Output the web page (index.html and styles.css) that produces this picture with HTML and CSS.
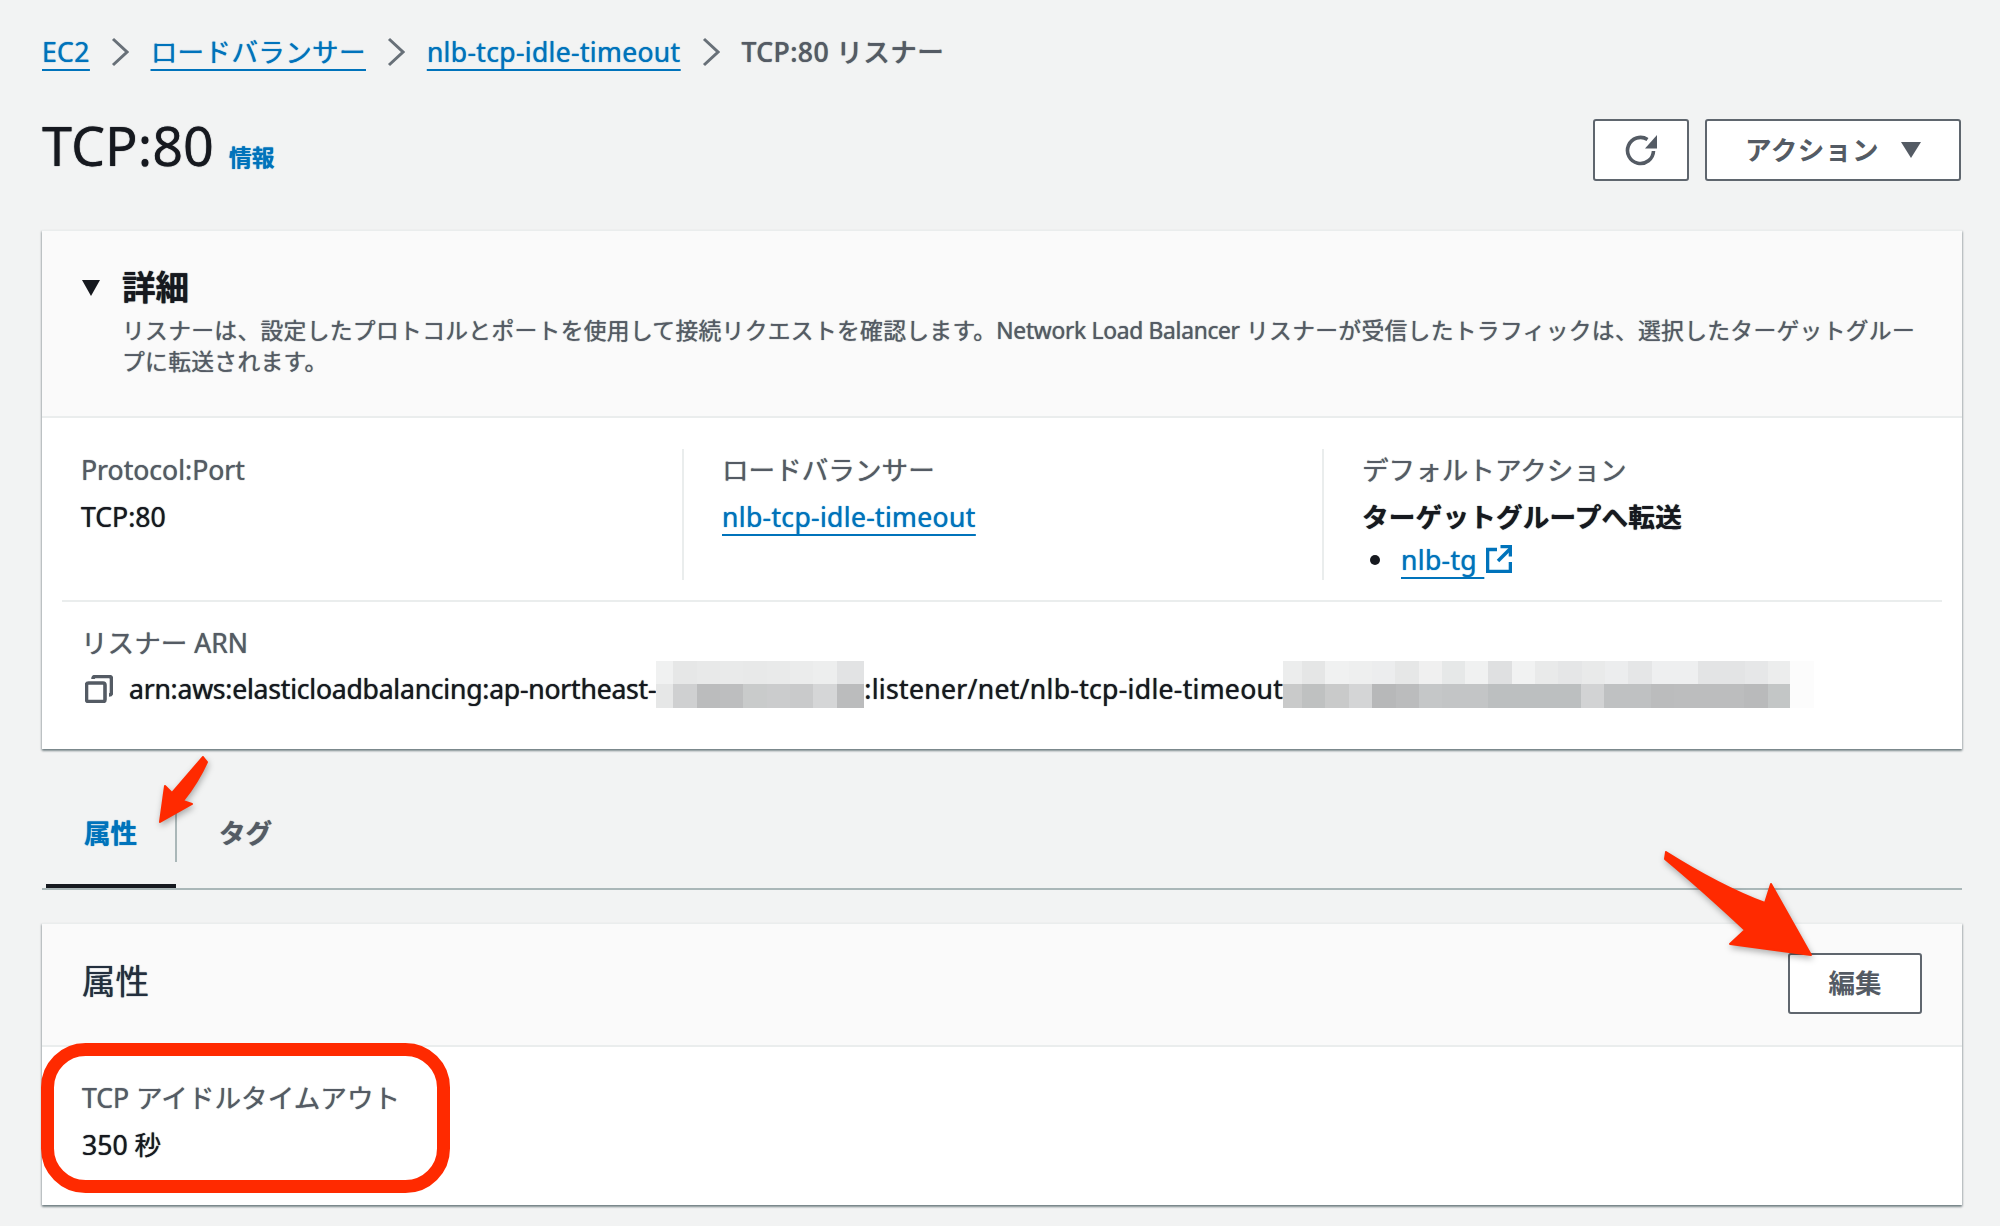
FILE: index.html
```html
<!doctype html>
<html lang="ja">
  <head>
    <meta charset="UTF-8" />
    <title>TCP:80 リスナー</title>
    <link rel="stylesheet" href="styles.css">
  </head>
  <body>
    <div class="page">
      <nav class="crumbs">
        <a href="#">EC2</a>
        <svg class="chevron" viewBox="0 0 18 30"><path d="M2 2 L16 15 L2 28" /></svg>
        <a href="#">ロードバランサー</a>
        <svg class="chevron" viewBox="0 0 18 30"><path d="M2 2 L16 15 L2 28" /></svg>
        <a href="#">nlb-tcp-idle-timeout</a>
        <svg class="chevron" viewBox="0 0 18 30"><path d="M2 2 L16 15 L2 28" /></svg>
        <span class="crumb-current">TCP:80 リスナー</span>
      </nav>

      <header class="title-row">
        <div class="title">
          <h1>TCP:80</h1>
          <a href="#" class="info">情報</a>
        </div>
        <div class="actions">
          <button class="btn btn-refresh">
            <svg class="refresh-icon" viewBox="0 0 32 32">
              <path d="M28.5 17a13 13 0 1 1-6-11.5" />
              <polygon points="20,14.5 32,14.5 32,1" />
            </svg>
          </button>
          <button class="btn btn-actions">アクション<span class="caret"></span></button>
        </div>
      </header>

      <section class="panel">
        <div class="details-head">
          <span class="expand-mark"></span>
          <div>
            <h2>詳細</h2>
            <p class="desc">リスナーは、設定したプロトコルとポートを使用して接続リクエストを確認します。<span class="desc-latin">Network Load Balancer</span> リスナーが受信したトラフィックは、選択したターゲットグルー<br />プに転送されます。</p>
          </div>
        </div>
        <div class="details-body">
          <div class="columns">
            <div class="col">
              <div class="label">Protocol:Port</div>
              <div class="value">TCP:80</div>
            </div>
            <div class="col">
              <div class="label">ロードバランサー</div>
              <div class="value"><a href="#">nlb-tcp-idle-timeout</a></div>
            </div>
            <div class="col">
              <div class="label">デフォルトアクション</div>
              <div class="value strong">ターゲットグループへ転送</div>
              <ul class="targets">
                <li>
                  <a href="#">nlb-tg&nbsp;</a>
                  <svg class="external-icon" viewBox="0 0 26 28">
                    <path d="M11 4.5 H1.5 V26.5 H24.5 V17" />
                    <path d="M12 16 L24 4" />
                    <path d="M14.5 1.5 H24.5 V11.5" />
                  </svg>
                </li>
              </ul>
            </div>
          </div>
          <div class="arn">
            <div class="label">リスナー ARN</div>
            <div class="arn-value">
              <svg class="copy-icon" viewBox="0 0 28 28">
                <rect x="1.5" y="8" width="18.5" height="18.5" rx="2" />
                <path d="M8 4 Q8 1.5 10.5 1.5 H24 Q26.5 1.5 26.5 4 V17.5 Q26.5 20 24 20" />
              </svg>
              <span class="arn-head">arn:aws:elasticloadbalancing:ap-northeast-</span>
              <svg class="mosaic mosaic-a" viewBox="0 0 208 47">
                <rect x="0" y="0" width="17" height="23" fill="#f0f1f1" />
                <rect x="17" y="0" width="24" height="23" fill="#e6e7e7" />
                <rect x="41" y="0" width="23" height="23" fill="#e8e9e9" />
                <rect x="64" y="0" width="23" height="23" fill="#e9eaea" />
                <rect x="87" y="0" width="24" height="23" fill="#e8e9e9" />
                <rect x="111" y="0" width="23" height="23" fill="#e9eaea" />
                <rect x="134" y="0" width="23" height="23" fill="#ebecec" />
                <rect x="157" y="0" width="24" height="23" fill="#edeeee" />
                <rect x="181" y="0" width="27" height="23" fill="#e2e3e4" />
                <rect x="0" y="23" width="17" height="24" fill="#e6e7e7" />
                <rect x="17" y="23" width="24" height="24" fill="#cfd0d1" />
                <rect x="41" y="23" width="23" height="24" fill="#bbbcbd" />
                <rect x="64" y="23" width="23" height="24" fill="#bdbebf" />
                <rect x="87" y="23" width="24" height="24" fill="#c9cbcb" />
                <rect x="111" y="23" width="23" height="24" fill="#cbcccd" />
                <rect x="134" y="23" width="23" height="24" fill="#c9cacb" />
                <rect x="157" y="23" width="24" height="24" fill="#d5d6d7" />
                <rect x="181" y="23" width="27" height="24" fill="#bbbcbd" />
              </svg>
              <span class="arn-tail">:listener/net/nlb-tcp-idle-timeout</span>
              <svg class="mosaic mosaic-b" viewBox="0 0 531 47">
                <rect x="0" y="0" width="19" height="23" fill="#eceded" />
                <rect x="19" y="0" width="23" height="23" fill="#e5e6e6" />
                <rect x="42" y="0" width="24" height="23" fill="#f0f1f1" />
                <rect x="66" y="0" width="23" height="23" fill="#eeefef" />
                <rect x="89" y="0" width="23" height="23" fill="#ecedee" />
                <rect x="112" y="0" width="24" height="23" fill="#e6e7e7" />
                <rect x="136" y="0" width="23" height="23" fill="#f0f0f0" />
                <rect x="159" y="0" width="23" height="23" fill="#e6e8e8" />
                <rect x="182" y="0" width="23" height="23" fill="#f0f1f1" />
                <rect x="205" y="0" width="24" height="23" fill="#dfe0e1" />
                <rect x="229" y="0" width="23" height="23" fill="#f1f2f2" />
                <rect x="252" y="0" width="23" height="23" fill="#e9eaea" />
                <rect x="275" y="0" width="24" height="23" fill="#e5e6e7" />
                <rect x="299" y="0" width="23" height="23" fill="#e9eaea" />
                <rect x="322" y="0" width="23" height="23" fill="#ecedee" />
                <rect x="345" y="0" width="24" height="23" fill="#e5e6e7" />
                <rect x="369" y="0" width="46" height="23" fill="#eeeff0" />
                <rect x="415" y="0" width="47" height="23" fill="#e3e4e5" />
                <rect x="462" y="0" width="23" height="23" fill="#e6e7e8" />
                <rect x="485" y="0" width="22" height="23" fill="#eceded" />
                <rect x="507" y="0" width="24" height="23" fill="#fcfcfc" />
                <rect x="0" y="23" width="19" height="24" fill="#c9caca" />
                <rect x="19" y="23" width="23" height="24" fill="#bfc1c1" />
                <rect x="42" y="23" width="24" height="24" fill="#c9caca" />
                <rect x="66" y="23" width="23" height="24" fill="#d4d5d6" />
                <rect x="89" y="23" width="24" height="24" fill="#b7b8b9" />
                <rect x="113" y="23" width="23" height="24" fill="#bbbcbd" />
                <rect x="136" y="23" width="23" height="24" fill="#c5c7c8" />
                <rect x="159" y="23" width="46" height="24" fill="#c3c5c6" />
                <rect x="205" y="23" width="93" height="24" fill="#bcbfc0" />
                <rect x="298" y="23" width="23" height="24" fill="#d2d3d4" />
                <rect x="321" y="23" width="47" height="24" fill="#bfc1c2" />
                <rect x="368" y="23" width="23" height="24" fill="#bbbcbd" />
                <rect x="391" y="23" width="70" height="24" fill="#bcbdbe" />
                <rect x="461" y="23" width="24" height="24" fill="#b9babb" />
                <rect x="485" y="23" width="22" height="24" fill="#c3c6c6" />
                <rect x="507" y="23" width="24" height="24" fill="#fcfcfc" />
              </svg>
            </div>
          </div>
        </div>
      </section>

      <div class="tabs">
        <div class="tab tab-active"><span class="tab-label">属性</span></div>
        <div class="tab"><span class="tab-label tab-plain">タグ</span></div>
      </div>

      <section class="panel panel-attrs">
        <div class="attrs-head">
          <h3>属性</h3>
          <button class="btn btn-edit">編集</button>
        </div>
        <div class="attrs-body">
          <div class="label">TCP アイドルタイムアウト</div>
          <div class="value">350 秒</div>
        </div>
      </section>
    </div>

    <!-- annotations drawn on top of the screenshot -->
    <svg class="marks" viewBox="0 0 2000 1226">
      <rect class="mark-ring" x="47.5" y="1049.5" width="396" height="137" rx="38" />
      <path class="mark-arrow" d="M203 757 L172 793 L165 786 L160 822 L192 804 L183 801 Q198 782 207 762 Z" />
      <path class="mark-arrow" d="M1666 852 Q1720 886 1765 903 L1771 884 L1811 955 L1730 944 L1745 930 Q1700 888 1665 859 Z" />
    </svg>
  </body>
</html>
```

FILE: styles.css
```css
* {
  box-sizing: border-box;
}
body {
  margin: 0;
  background: #f2f3f3;
  color: #16191f;
  font-family: "Noto Sans", "Noto Sans CJK JP", sans-serif;
  font-size: 26.6px;
  line-height: 38px;
  overflow: hidden;
  text-shadow: 0 0 1px currentColor;
}
a {
  color: #0073bb;
  letter-spacing: 0.3px;
  text-decoration: underline;
  text-decoration-thickness: 2px;
  text-underline-offset: 7px;
}
.page {
  position: relative;
  width: 2000px;
  height: 1226px;
  padding: 30px 38px 0 42px;
}

/* breadcrumbs */
.crumbs {
  display: flex;
  align-items: center;
  gap: 21.5px;
  height: 44px;
}
.chevron {
  width: 18px;
  height: 30px;
  fill: none;
  stroke: #687078;
  stroke-width: 3;
}
.crumb-current {
  color: #545b64;
  letter-spacing: 0.4px;
  font-weight: 500;
}

/* title */
.title-row {
  display: flex;
  justify-content: space-between;
  margin-top: 45px;
  height: 62px;
}
.title {
  display: flex;
  align-items: baseline;
  gap: 15px;
  margin-top: -5px;
}
h1 {
  margin: 0;
  font-size: 54px;
  font-weight: 400;
  line-height: 62px;
}
.info {
  font-size: 22.8px;
  font-weight: 700;
  letter-spacing: 0;
  text-decoration: none;
}
.actions {
  display: flex;
  gap: 16px;
  margin-right: 1px;
}
.btn {
  display: flex;
  align-items: center;
  justify-content: center;
  background: #fff;
  border: 2px solid #5f666e;
  border-radius: 3px;
  color: #545b64;
  font-family: inherit;
  font-size: 26.6px;
  font-weight: 700;
  padding: 0 0 3px;
}
.btn-refresh {
  width: 96px;
  padding: 0;
}
.refresh-icon {
  width: 32px;
  height: 32px;
  fill: #545b64;
}
.refresh-icon path {
  fill: none;
  stroke: #545b64;
  stroke-width: 3.6;
}
.btn-actions {
  width: 256px;
  gap: 22px;
  letter-spacing: 0.5px;
}
.caret {
  width: 0;
  height: 0;
  margin-top: 3px;
  border-left: 10px solid transparent;
  border-right: 10px solid transparent;
  border-top: 16px solid #545b64;
}

/* panels */
.panel {
  background: #fff;
  margin-top: 49px;
  height: 519px;
  box-shadow: 0 2px 2px rgba(0, 28, 36, 0.4), 1px 1px 2px rgba(0, 28, 36, 0.15), -1px 1px 2px rgba(0, 28, 36, 0.15);
  border-top: 1px solid #eaeded;
}
.details-head {
  display: flex;
  background: #fafafa;
  border-bottom: 2px solid #eaeded;
  height: 187px;
  padding: 36px 36px 0 40px;
}
.expand-mark {
  flex: none;
  width: 0;
  height: 0;
  margin: 13px 22px 0 0;
  border-left: 9px solid transparent;
  border-right: 9px solid transparent;
  border-top: 16px solid #16191f;
}
h2 {
  margin: 0;
  font-size: 33.6px;
  font-weight: 700;
  line-height: 40px;
}
.desc {
  margin: 8px 0 0;
  color: #545b64;
  font-size: 22.8px;
  letter-spacing: 0.29px;
  line-height: 31px;
  white-space: nowrap;
}
.desc-latin {
  letter-spacing: -0.3px;
}
.details-body {
  padding: 31px 20px 0;
}
.columns {
  display: grid;
  grid-template-columns: 620px 640px 1fr;
  height: 131px;
}
.col {
  padding-left: 38px;
  border-left: 2px solid #eaeded;
}
.col:first-child {
  padding-left: 19px;
  border-left: none;
}
.label {
  color: #545b64;
}
.value {
  margin-top: 9px;
}
.col .label {
  margin-top: 2px;
}
.strong {
  font-weight: 700;
  letter-spacing: 0.2px;
}
.targets {
  margin: 5px 0 0;
  padding: 0;
  list-style: none;
}
.targets li {
  display: flex;
  align-items: center;
}
.targets li::before {
  content: "";
  flex: none;
  width: 10px;
  height: 10px;
  margin: 0 21px 0 8px;
  border-radius: 50%;
  background: #16191f;
}
.external-icon {
  width: 26px;
  height: 28px;
  margin: -3px 0 0 2px;
  fill: none;
  stroke: #0073bb;
  stroke-width: 3.6;
}
.arn {
  margin-top: 20px;
  padding: 22px 0 0 19px;
  border-top: 2px solid #eaeded;
}
.arn-value {
  display: flex;
  align-items: center;
  margin-top: 8px;
  white-space: nowrap;
}
.arn-head {
  letter-spacing: -0.24px;
}
.arn-tail {
  letter-spacing: 0.29px;
}
.copy-icon {
  flex: none;
  width: 28px;
  height: 28px;
  margin: 0 16px 0 4px;
  fill: none;
  stroke: #545b64;
  stroke-width: 3.6;
}
.mosaic {
  flex: none;
  height: 47px;
  margin-top: -10px;
}
.mosaic-a {
  width: 208px;
}
.mosaic-b {
  width: 531px;
}

/* tabs */
.tabs {
  display: flex;
  margin-top: 51px;
  height: 90px;
  padding-left: 4px;
  border-bottom: 2px solid #aab7b8;
}
.tab {
  height: 88px;
}
.tab-active {
  width: 130px;
  border-bottom: 4px solid #16191f;
  color: #0073bb;
  font-weight: 700;
  text-align: center;
}
.tab-label {
  display: block;
  height: 62px;
  line-height: 66px;
}
.tab-active .tab-label {
  width: 131px;
  border-right: 2px solid #aab7b8;
}
.tab-plain {
  padding-left: 43px;
  color: #545b64;
  font-weight: 700;
}

.panel-attrs {
  margin-top: 33px;
  height: 282px;
}
.attrs-head {
  display: flex;
  align-items: center;
  justify-content: space-between;
  background: #fafafa;
  border-bottom: 2px solid #eaeded;
  height: 123px;
  padding: 0 40px 3px;
}
h3 {
  margin: 0 0 5px;
  font-size: 33.6px;
  font-weight: 400;
  color: #232f3e;
}
.btn-edit {
  width: 134px;
  height: 61px;
}
.attrs-body {
  padding: 32px 40px 0;
}

/* annotations */
.marks {
  position: absolute;
  left: 0;
  top: 0;
  width: 2000px;
  height: 1226px;
  pointer-events: none;
}
.mark-ring {
  fill: none;
  stroke: #ff2a00;
  stroke-width: 13;
}
.mark-arrow {
  fill: #ff2a00;
  stroke: #ff2a00;
  stroke-width: 2;
  stroke-linejoin: round;
  filter: drop-shadow(1px 3px 3px rgba(0, 0, 0, 0.3));
}
```
